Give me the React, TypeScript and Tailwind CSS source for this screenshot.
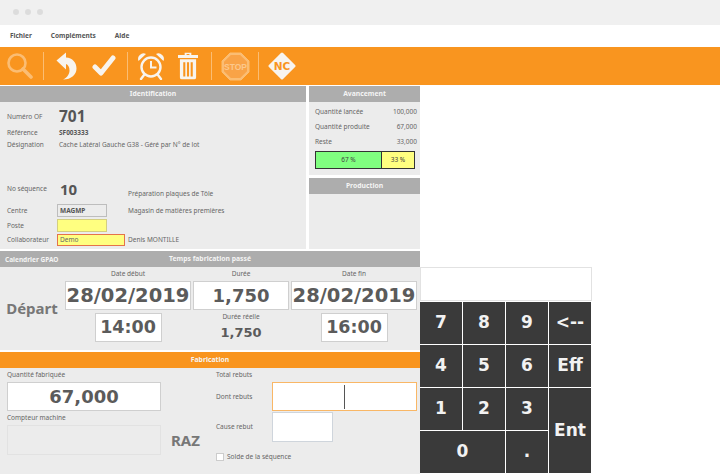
import React from "react";

const dejavu = "font-['DejaVu_Sans',sans-serif]";

function PanelHeader({ children, orange }: { children: React.ReactNode; orange?: boolean }) {
  return (
    <div
      className={`h-[16px] shrink-0 pt-[1px] flex items-center justify-center text-[6.800px] font-bold text-[#f4f4f4] ${
        orange ? "bg-[#f9951f]" : "bg-[#adadad]"
      }`}
    >
      {children}
    </div>
  );
}

function Divider({ className }: { className: string }) {
  return <div className={`w-px h-[28px] bg-[#fbbd73] ${className}`} />;
}

function Field({ className, children }: { className: string; children?: React.ReactNode }) {
  return (
    <div className={`bg-white border border-[#cfcfcf] flex items-center justify-center font-bold text-[#5b5b5b] ${dejavu} ${className}`}>
      {children}
    </div>
  );
}

function Key({ children, className = "" }: { children: React.ReactNode; className?: string }) {
  return (
    <div className={`bg-[#3a3a3a] text-[#f2f2f2] font-bold text-[17px] flex items-center justify-center ${dejavu} ${className}`}>
      {children}
    </div>
  );
}

function InfoRow({ label, value }: { label: string; value: string }) {
  return (
    <div className="flex justify-between h-[15px] items-center">
      <span>{label}</span>
      <span>{value}</span>
    </div>
  );
}

export default function App() {
  return (
    <div className="w-[720px] h-[475px] bg-white overflow-hidden flex flex-col text-[#666] text-[6.500px] font-['Noto_Sans',sans-serif]">
      <div className="h-[25px] shrink-0 bg-[#f0f0f0] flex items-center gap-[6px] pl-[13px] pb-[1px]">
        <span className="w-[6px] h-[6px] rounded-full bg-[#dcdcdc]" />
        <span className="w-[6px] h-[6px] rounded-full bg-[#dcdcdc]" />
        <span className="w-[6px] h-[6px] rounded-full bg-[#dcdcdc]" />
      </div>

      <div className="h-[22px] shrink-0 flex items-center pl-[10px] gap-[19px] text-[6.500px] font-bold text-[#555]">
        <span>Fichier</span>
        <span>Compléments</span>
        <span>Aide</span>
      </div>

      <div className="h-[38px] shrink-0 bg-[#f9951f] flex items-center pl-[6px]">
        <svg width="27" height="28" viewBox="0 0 27 28" fill="none" stroke="#fbbd73" strokeWidth="2.6">
          <circle cx="11" cy="11" r="8.5" />
          <path d="M17 17l8 8" strokeWidth="3.6" strokeLinecap="round" />
        </svg>
        <Divider className="ml-[10px] mr-[12px]" />
        <svg width="21" height="28" viewBox="0 0 21 28" fill="#f8f4ee">
          <path d="M0.500 8.500 10 0.500 10 5.500C16.500 6 20.500 10.500 20.500 16.500C20.500 22.500 15.500 27.500 7 27.500C11.500 25.500 13.500 22 13.500 18.500C13.500 15 12 12.500 10 12V17.500Z" />
        </svg>
        <svg className="ml-[15px]" width="24" height="22" viewBox="0 0 24 22" fill="none" stroke="#f8f4ee" strokeWidth="5" strokeLinecap="round" strokeLinejoin="round">
          <path d="M3 12l6 6L21 3" />
        </svg>
        <Divider className="ml-[11px] mr-[9px]" />
        <svg width="28" height="28" viewBox="0 0 28 28" fill="none" stroke="#f8f4ee" strokeWidth="2.4">
          <circle cx="14" cy="15" r="9.500" />
          <path d="M14 9v6.500h5.500" strokeWidth="2" />
          <path d="M1.500 9a5.500 5.500 0 0 1 7.500-7zM26.500 9a5.500 5.500 0 0 0-7.500-7z" fill="#f8f4ee" stroke="none" />
          <path d="M7 23l-3 4M21 23l3 4" strokeLinecap="round" />
        </svg>
        <svg className="ml-[13px]" width="20" height="28" viewBox="0 0 21 28" fill="#f8f4ee">
          <path d="M7 0h7v2.500h7v3H0v-3h7zM9 1.500v1h3v-1z" fillRule="evenodd" />
          <path d="M2 7h17v19a2 2 0 0 1-2 2H4a2 2 0 0 1-2-2zM5.500 10v15h2.200V10zM9.400 10v15h2.200V10zM13.300 10v15h2.200V10z" fillRule="evenodd" />
        </svg>
        <Divider className="ml-[13px] mr-[9px]" />
        <svg width="29" height="29" viewBox="0 0 29 29">
          <path d="M9 1h11l8 8v11l-8 8H9l-8-8V9z" fill="#fbbd73" stroke="#fbbd73" strokeWidth="1" />
          <path d="M9.800 3h9.400l6.800 6.800v9.400l-6.800 6.800H9.800L3 19.200V9.800z" fill="#f9a347" />
          <text x="14.500" y="17.500" textAnchor="middle" fontSize="8.500" fontWeight="bold" fill="#fcc88c" fontFamily="'Liberation Sans',sans-serif">STOP</text>
        </svg>
        <Divider className="ml-[8px] mr-[9px]" />
        <svg width="28" height="28" viewBox="0 0 28 28">
          <path d="M14 2 26 14 14 26 2 14z" fill="#f8f4ee" stroke="#f8f4ee" strokeLinejoin="round" strokeWidth="3" />
          <text x="14" y="18" textAnchor="middle" fontSize="10.500" fontWeight="bold" fill="#f9951f" fontFamily="'DejaVu Sans',sans-serif">NC</text>
        </svg>
      </div>

      <div className="flex flex-1 min-h-0 pt-[1px] pb-[1px]">
        <div className="w-[420px] shrink-0 flex flex-col">
          <div className="flex h-[163px] shrink-0 gap-[3px]">
            <div className="w-[306px] bg-[#ececec] flex flex-col">
              <PanelHeader>Identification</PanelHeader>
              <div className="flex-1 flex flex-col pl-[7px]">
                <div className="flex items-center h-[20px] mt-[5px]">
                  <span className="w-[52px]">Numéro OF</span>
                  <span className="text-[15.500px] font-bold text-[#555]">701</span>
                </div>
                <div className="flex items-center h-[12px]">
                  <span className="w-[52px]">Référence</span>
                  <span className="font-bold text-[#555]">SF003333</span>
                </div>
                <div className="flex items-center h-[12px]">
                  <span className="w-[52px]">Désignation</span>
                  <span>Cache Latéral Gauche G38 - Géré par N° de lot</span>
                </div>
                <div className="flex items-center h-[20px] mt-[28px]">
                  <span className="w-[53px]">No séquence</span>
                  <span className="text-[15px] font-bold text-[#555] w-[68px]">10</span>
                  <span className="pt-[10px]">Préparation plaques de Tôle</span>
                </div>
                <div className="flex items-center h-[13px] mt-[5px]">
                  <span className="w-[50px]">Centre</span>
                  <div className="w-[50px] h-[13px] border border-[#bdbdbd] font-bold text-[#555] pl-[2px] flex items-center">MAGMP</div>
                  <span className="ml-[21px]">Magasin de matières premières</span>
                </div>
                <div className="flex items-center h-[13px] mt-[2px]">
                  <span className="w-[50px]">Poste</span>
                  <div className="w-[50px] h-[13px] border border-[#d4cf80] bg-[#ffff80]" />
                </div>
                <div className="flex items-center h-[12px] mt-[2px]">
                  <span className="w-[50px]">Collaborateur</span>
                  <div className="w-[68px] h-[12px] border border-[#e5734a] bg-[#ffff80] pl-[2px] flex items-center">Demo</div>
                  <span className="ml-[3px]">Denis MONTILLE</span>
                </div>
              </div>
            </div>
            <div className="flex-1 flex flex-col gap-[3px]">
              <div className="h-[89px] bg-[#ececec] flex flex-col">
                <PanelHeader>Avancement</PanelHeader>
                <div className="pl-[6px] pr-[3px] pt-[2px]">
                  <InfoRow label="Quantité lancée" value="100,000" />
                  <InfoRow label="Quantité produite" value="67,000" />
                  <InfoRow label="Reste" value="33,000" />
                  <div className="mt-[2px] mr-[2px] h-[18px] border border-[#333] flex text-[#444]">
                    <div className="w-[66px] bg-[#80ff80] border-r border-[#333] flex items-center justify-center">67 %</div>
                    <div className="flex-1 bg-[#ffff80] flex items-center justify-center">33 %</div>
                  </div>
                </div>
              </div>
              <div className="flex-1 bg-[#ececec]">
                <PanelHeader>Production</PanelHeader>
              </div>
            </div>
          </div>

          <div className="h-[99px] shrink-0 mt-[2px] bg-[#ececec] flex flex-col">
            <div className="relative">
              <PanelHeader>Temps fabrication passé</PanelHeader>
              <span className="absolute left-[5px] top-[4px] text-[6.500px] font-bold text-[#f4f4f4]">Calendrier GPAO</span>
            </div>
            <div className="flex flex-1 text-center">
              <div className="w-[65px] text-[15px] font-bold text-[#777] flex items-center justify-center pr-[1px]">Départ</div>
              <div className="w-[126px] flex flex-col items-center">
                <div className="h-[14px] flex items-center">Date début</div>
                <Field className="w-[126px] h-[29px] text-[19.500px]">28/02/2019</Field>
                <Field className="w-[67px] h-[29px] text-[17.500px] mt-[3px]">14:00</Field>
              </div>
              <div className="w-[96px] ml-[2px] flex flex-col items-center">
                <div className="h-[14px] flex items-center">Durée</div>
                <Field className="w-[96px] h-[29px] text-[18px]">1,750</Field>
                <div className="mt-[2px]">Durée réelle</div>
                <div className={`text-[13px] font-bold text-[#5b5b5b] mt-[2px] leading-[18px] ${dejavu}`}>1,750</div>
              </div>
              <div className="w-[126px] ml-[2px] flex flex-col items-center">
                <div className="h-[14px] flex items-center">Date fin</div>
                <Field className="w-[126px] h-[29px] text-[19.500px]">28/02/2019</Field>
                <Field className="w-[67px] h-[29px] text-[17.500px] mt-[3px]">16:00</Field>
              </div>
            </div>
          </div>

          <div className="flex-1 mt-[2px] bg-[#ececec] flex flex-col">
            <PanelHeader orange>Fabrication</PanelHeader>
            <div className="flex flex-1">
              <div className="w-[216px] pl-[7px] flex flex-col">
                <div className="h-[14px] flex items-center">Quantité fabriquée</div>
                <Field className="w-[154px] h-[29px] text-[18px]">67,000</Field>
                <div className="h-[14px] flex items-center">Compteur machine</div>
                <div className="flex items-center">
                  <div className="w-[154px] h-[30px] border border-[#e2e2e2]" />
                  <span className="ml-[10px] text-[15px] font-bold text-[#777]">RAZ</span>
                </div>
              </div>
              <div className="flex-1 flex flex-col">
                <div className="h-[14px] flex items-center">Total rebuts</div>
                <div className="flex items-center">
                  <span className="w-[56px]">Dont rebuts</span>
                  <div className="w-[145px] h-[29px] bg-white border border-[#f9b766] flex items-center justify-center">
                    <div className="w-px h-[24px] bg-[#555]" />
                  </div>
                </div>
                <div className="flex items-center mt-[1px]">
                  <span className="w-[56px]">Cause rebut</span>
                  <div className="w-[61px] h-[30px] bg-white border border-[#cfd5dc]" />
                </div>
                <div className="flex items-center mt-[10px]">
                  <div className="w-[8px] h-[8px] bg-white border border-[#ccc] mr-[3px]" />
                  <span>Solde de la séquence</span>
                </div>
              </div>
            </div>
          </div>
        </div>

        <div className="w-[172px] shrink-0 flex flex-col pt-[181px]">
          <div className="h-[34px] w-[172px] border border-[#e2e2e2] shrink-0" />
          <div className="grid grid-cols-[42px_42px_42px_42px] grid-rows-[42px_42px_42px_42px] gap-[1px] mt-[1px]">
            <Key>7</Key>
            <Key>8</Key>
            <Key>9</Key>
            <Key>&lt;--</Key>
            <Key>4</Key>
            <Key>5</Key>
            <Key>6</Key>
            <Key>Eff</Key>
            <Key>1</Key>
            <Key>2</Key>
            <Key>3</Key>
            <Key className="row-span-2">Ent</Key>
            <Key className="col-span-2">0</Key>
            <Key>.</Key>
          </div>
        </div>
      </div>
    </div>
  );
}
